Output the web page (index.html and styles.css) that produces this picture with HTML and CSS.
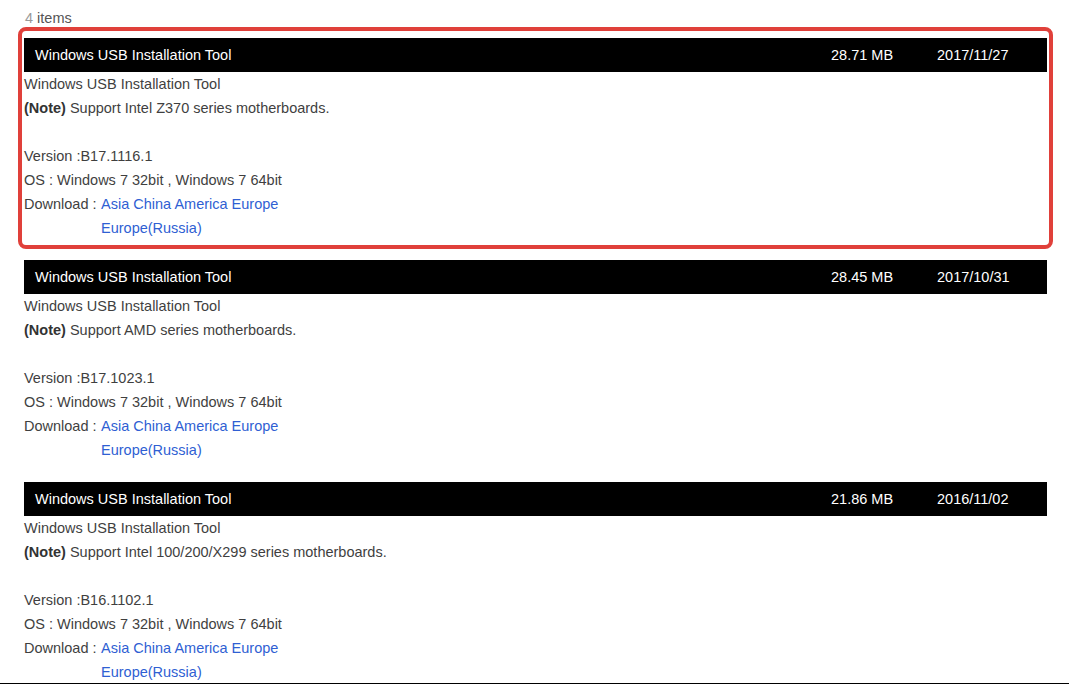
FILE: index.html
```html
<!DOCTYPE html>
<html>
<head>
<meta charset="utf-8">
<link rel="stylesheet" href="styles.css">
</head>
<body>
<div class="page">
  <div class="count"><span class="num">4</span> items</div>
  <div class="list">
    <div class="card highlighted">
      <div class="head"><span class="title">Windows USB Installation Tool</span><span class="size">28.71 MB</span><span class="date">2017/11/27</span></div>
      <div class="body">
        <div class="line">Windows USB Installation Tool</div>
        <div class="line"><b>(Note)</b> Support Intel Z370 series motherboards.</div>
        <div class="line"></div>
        <div class="line">Version :B17.1116.1</div>
        <div class="line">OS : Windows 7 32bit , Windows 7 64bit</div>
        <div class="dl"><span class="label">Download :</span><span class="links"><a href="#">Asia</a> <a href="#">China</a> <a href="#">America</a> <a href="#">Europe</a> <a href="#">Europe(Russia)</a></span></div>
      </div>
    </div>
    <div class="card">
      <div class="head"><span class="title">Windows USB Installation Tool</span><span class="size">28.45 MB</span><span class="date">2017/10/31</span></div>
      <div class="body">
        <div class="line">Windows USB Installation Tool</div>
        <div class="line"><b>(Note)</b> Support AMD series motherboards.</div>
        <div class="line"></div>
        <div class="line">Version :B17.1023.1</div>
        <div class="line">OS : Windows 7 32bit , Windows 7 64bit</div>
        <div class="dl"><span class="label">Download :</span><span class="links"><a href="#">Asia</a> <a href="#">China</a> <a href="#">America</a> <a href="#">Europe</a> <a href="#">Europe(Russia)</a></span></div>
      </div>
    </div>
    <div class="card">
      <div class="head"><span class="title">Windows USB Installation Tool</span><span class="size">21.86 MB</span><span class="date">2016/11/02</span></div>
      <div class="body">
        <div class="line">Windows USB Installation Tool</div>
        <div class="line"><b>(Note)</b> Support Intel 100/200/X299 series motherboards.</div>
        <div class="line"></div>
        <div class="line">Version :B16.1102.1</div>
        <div class="line">OS : Windows 7 32bit , Windows 7 64bit</div>
        <div class="dl"><span class="label">Download :</span><span class="links"><a href="#">Asia</a> <a href="#">China</a> <a href="#">America</a> <a href="#">Europe</a> <a href="#">Europe(Russia)</a></span></div>
      </div>
    </div>
  </div>
</div>
</body>
</html>
```

FILE: styles.css
```css
html, body {
  margin: 0;
  padding: 0;
  background: #fff;
}
body {
  font-family: "Liberation Sans", Arial, sans-serif;
  font-size: 14.5px;
  color: #3f3f3f;
}
.page {
  height: 683px;
  overflow: hidden;
  border-bottom: 1px solid #000;
}
.count {
  padding: 10px 0 0 25px;
  line-height: 16px;
  height: 16px;
  margin-bottom: 12px;
  color: #555;
}
.count .num {
  color: #999;
}
.list {
  display: flex;
  flex-direction: column;
  gap: 20px;
  margin-left: 24px;
  width: 1023px;
}
.card {
  position: relative;
}
.highlighted::after {
  content: "";
  position: absolute;
  left: -6px;
  top: -11px;
  right: -6px;
  bottom: -9px;
  border: 4px solid #e0403a;
  border-radius: 8px;
  pointer-events: none;
}
.head {
  display: grid;
  grid-template-columns: 1fr 106px 110px;
  align-items: center;
  height: 34px;
  background: #000;
  color: #fff;
  padding-left: 11px;
}
.body {
  display: flex;
  flex-direction: column;
}
.line {
  height: 24px;
  line-height: 24px;
}
.line b {
  color: #333;
}
.dl {
  display: flex;
  line-height: 24px;
}
.dl .label {
  width: 77px;
  white-space: pre;
}
.links {
  width: 190px;
}
.links a {
  color: #2f5fd3;
  text-decoration: none;
}
```
